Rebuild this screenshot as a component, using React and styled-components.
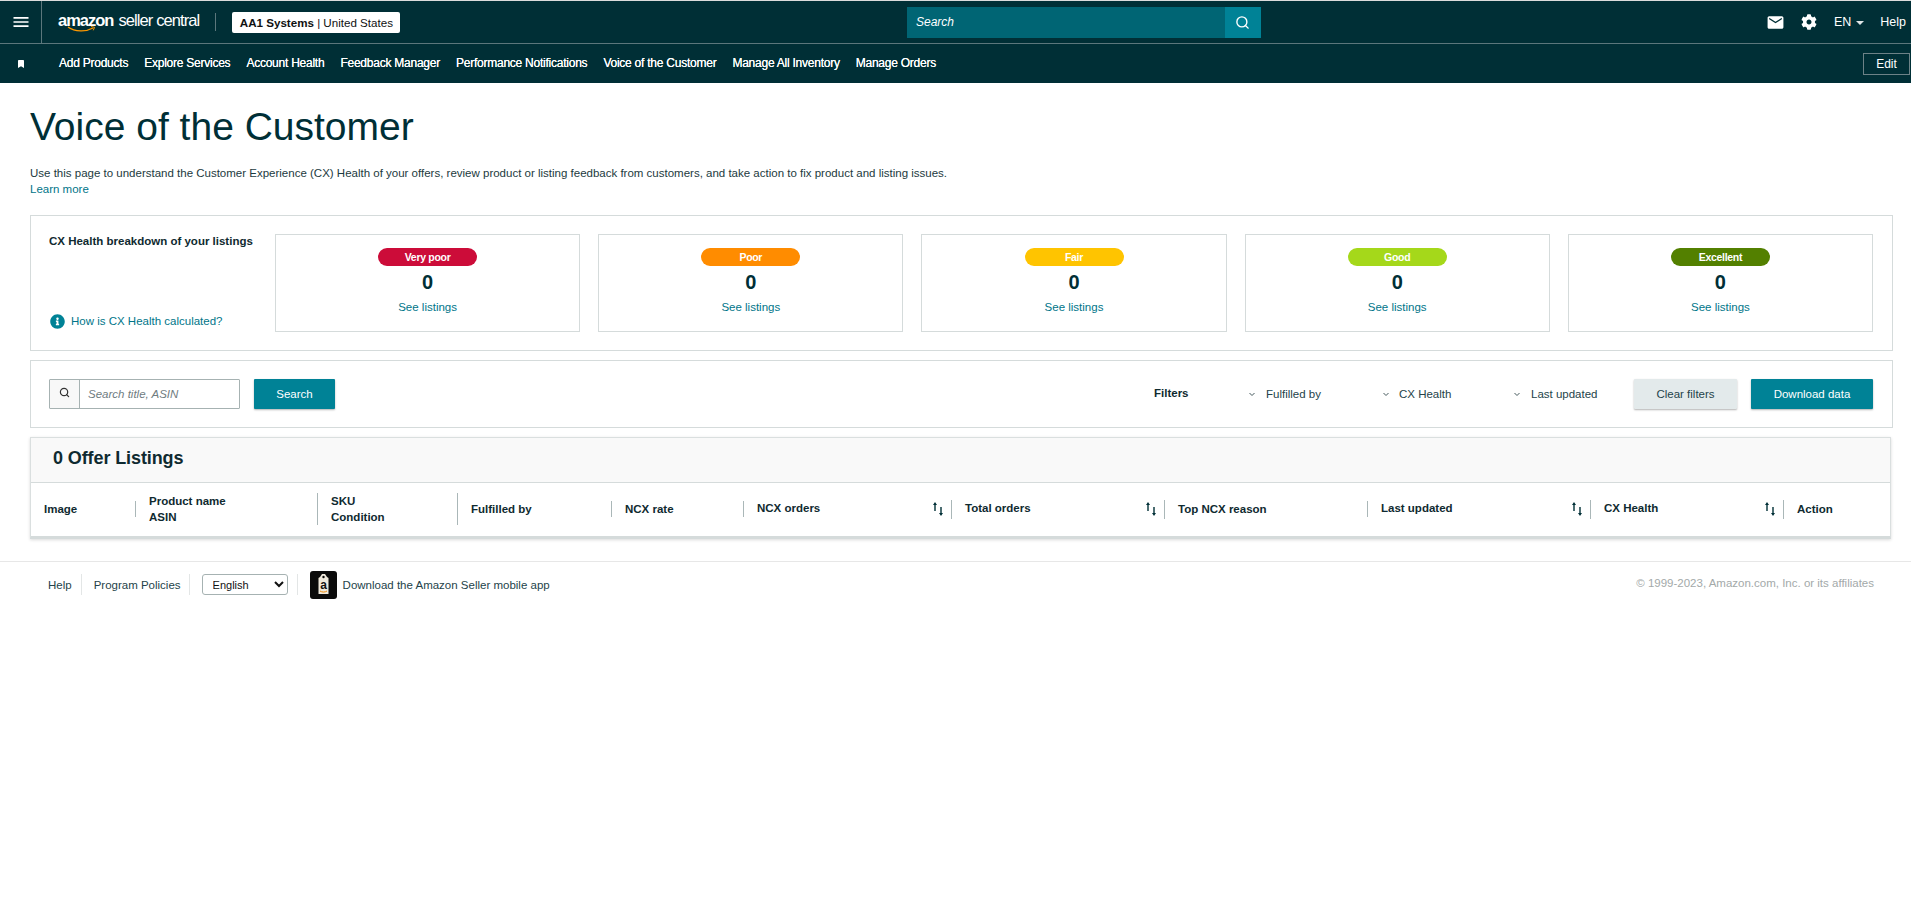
import React from 'react';
import styled, { createGlobalStyle } from 'styled-components';
import { Search as SearchIcon } from 'lucide-react';
import { MdEmail, MdMenu } from 'react-icons/md';
import { FaBookmark, FaCog, FaInfoCircle } from 'react-icons/fa';

const GlobalStyle = createGlobalStyle`
  html, body {
    margin: 0;
    padding: 0;
    background: #fff;
    font-family: "Liberation Sans", Arial, sans-serif;
    color: #002f36;
  }
  * { box-sizing: border-box; }
`;

const TopBar = styled.header`
  display: flex;
  align-items: center;
  height: 44px;
  background: #002f36;
  border-top: 1px solid #dcdcdc;
  border-bottom: 1px solid #5c777c;
  color: #fff;
`;

const Brand = styled.div`
  display: flex;
  align-items: center;
  width: 907px;
  height: 100%;
`;

const MenuCell = styled.div`
  display: flex;
  align-items: center;
  justify-content: center;
  width: 42px;
  height: 100%;
  border-right: 1px solid #5c777c;
  font-size: 20px;
`;

const Logo = styled.div`
  position: relative;
  display: flex;
  align-items: baseline;
  margin-left: 16px;
  padding-bottom: 4px;
  white-space: nowrap;
`;

const LogoWord = styled.span`
  font-size: 16.5px;
  font-weight: 700;
  letter-spacing: -1px;
`;

const LogoSub = styled.span`
  margin-left: 5px;
  font-size: 16.5px;
  letter-spacing: -0.9px;
`;

const LogoSmile = styled.svg`
  position: absolute;
  left: 9px;
  top: 15px;
`;

const BrandDivider = styled.div`
  width: 1px;
  height: 18px;
  margin: 0 16px;
  background: #5c777c;
`;

const AccountBadge = styled.div`
  display: flex;
  align-items: center;
  justify-content: center;
  width: 168px;
  height: 21px;
  background: #fff;
  border-radius: 2px;
  color: #0f1111;
  font-size: 11.6px;
  white-space: nowrap;
  b { font-weight: 700; }
`;

const GlobalSearch = styled.div`
  display: flex;
  width: 354px;
  height: 31px;
  margin-top: 1px;
`;

const GlobalSearchInput = styled.div`
  flex: 1;
  padding-left: 9px;
  background: #006574;
  font-size: 12px;
  font-style: italic;
  line-height: 31px;
`;

const GlobalSearchButton = styled.div`
  display: flex;
  align-items: center;
  justify-content: center;
  width: 36px;
  padding-right: 2px;
  background: #008296;
`;

const TopActions = styled.div`
  display: flex;
  align-items: center;
  margin-left: auto;
  padding-right: 5px;
  font-size: 12.5px;
`;

const ActionIcon = styled.span`
  display: flex;
  margin-right: ${({ $gap }) => $gap}px;
`;

const Caret = styled.span`
  width: 0;
  height: 0;
  margin: 2px 16px 0 5px;
  border-left: 4px solid transparent;
  border-right: 4px solid transparent;
  border-top: 4px solid #dfe6e7;
`;

const NavBar = styled.nav`
  display: flex;
  align-items: center;
  height: 39px;
  padding-left: 17px;
  padding-right: 1px;
  background: #002f36;
  color: #fff;
`;

const NavLinks = styled.div`
  display: flex;
  gap: 16px;
  margin-left: 34px;
  padding-bottom: 2px;
`;

const NavLink = styled.a`
  font-size: 12px;
  letter-spacing: -0.24px;
  text-shadow: 0 0 0.4px #fff;
  white-space: nowrap;
`;

const EditButton = styled.div`
  width: 47px;
  height: 22px;
  margin-left: auto;
  border: 1px solid #6d8287;
  font-size: 12px;
  line-height: 20px;
  text-align: center;
`;

const Main = styled.main`
  padding: 0 18px 0 30px;
`;

const Title = styled.h1`
  margin: 21px 0 15px;
  font-size: 39px;
  font-weight: 400;
  line-height: 46px;
`;

const Description = styled.p`
  margin: 0;
  font-size: 11.5px;
  line-height: 16px;
  color: #1c3a40;
`;

const TealLink = styled.a`
  display: block;
  color: #007589;
  font-size: 11.5px;
  line-height: 16px;
`;

const Panel = styled.section`
  display: flex;
  justify-content: space-between;
  margin-top: ${({ $top }) => $top}px;
  padding: 18px 19px 18px 18px;
  border: 1px solid #d5dbdb;
`;

const BreakdownIntro = styled.div`
  display: flex;
  flex-direction: column;
  justify-content: space-between;
  flex: 0 0 226px;
  padding-bottom: 3px;
`;

const BreakdownHeading = styled.div`
  margin-top: -1px;
  font-size: 11.5px;
  font-weight: 700;
  line-height: 16px;
  color: #0f2a30;
`;

const InfoRow = styled.div`
  display: flex;
  align-items: center;
  gap: 6px;
  padding-left: 1px;
  color: #008296;
`;

const Cards = styled.div`
  display: flex;
  flex: 1;
  gap: 18px;
`;

const Card = styled.div`
  display: flex;
  flex: 1;
  flex-direction: column;
  align-items: center;
  height: 98px;
  padding-top: 13px;
  border: 1px solid #d5dbdb;
`;

const Pill = styled.div`
  width: 99px;
  height: 18px;
  border-radius: 9px;
  background: ${({ $color }) => $color};
  color: #fff;
  font-size: 10.5px;
  font-weight: 700;
  letter-spacing: -0.3px;
  line-height: 18px;
  text-align: center;
`;

const Count = styled.div`
  margin: 4px 0 5px;
  font-size: 20px;
  font-weight: 700;
  line-height: 24px;
`;

const SearchGroup = styled.div`
  display: flex;
  align-items: stretch;
  gap: 14px;
`;

const SearchBox = styled.div`
  display: flex;
  width: 191px;
  height: 30px;
  border: 1px solid #a6b2b2;
  border-radius: 1px;
`;

const SearchAddon = styled.div`
  display: flex;
  align-items: center;
  justify-content: center;
  width: 30px;
  padding-bottom: 3px;
  background: #f8f8f8;
  border-right: 1px solid #a6b2b2;
  color: #333;
`;

const SearchPlaceholder = styled.div`
  padding-left: 8px;
  color: #6f7c7f;
  font-size: 11.5px;
  font-style: italic;
  line-height: 28px;
`;

const Button = styled.div`
  width: ${({ $width }) => $width}px;
  height: 30px;
  border-radius: 1px;
  background: ${({ $secondary }) => ($secondary ? '#e3eaeb' : '#008296')};
  box-shadow: 0 1px 2px rgba(0, 0, 0, 0.3);
  color: ${({ $secondary }) => ($secondary ? '#24434a' : '#fff')};
  font-size: 11.5px;
  line-height: 30px;
  text-align: center;
`;

const FilterGroup = styled.div`
  display: flex;
  align-items: center;
  font-size: 11.5px;
`;

const FilterLabel = styled.div`
  width: 95px;
  margin: -2px 0 0 1px;
  font-weight: 700;
  color: #0f2a30;
`;

const FilterSelect = styled.div`
  display: flex;
  align-items: center;
  gap: ${({ $gap }) => $gap}px;
  width: ${({ $width }) => $width}px;
  color: #24434a;
`;

const ClearSlot = styled.div`
  margin-right: 14px;
`;

const TablePanel = styled.section`
  margin: 9px 2px 0 0;
  border: 1px solid #dadfdf;
  border-bottom: 3px solid #d5dbdb;
  box-shadow: 0 1px 3px rgba(0, 0, 0, 0.15);
`;

const TableTitle = styled.div`
  height: 45px;
  padding-left: 22px;
  background: #f9f9f9;
  border-bottom: 1px solid #d5dbdb;
  font-size: 18px;
  font-weight: 700;
  letter-spacing: -0.1px;
  line-height: 41px;
  color: #0f2a30;
`;

const HeaderRow = styled.div`
  display: grid;
  grid-template-columns: 105px 182px 140px 154px 132px 208px 213px 203px 223px 193px 106px;
  height: 53px;
  padding-bottom: 1px;
`;

const HeaderCell = styled.div`
  display: flex;
  align-items: center;
  padding-left: 13px;
  color: #0f2a30;
  font-size: 11.5px;
  font-weight: 700;
  line-height: 16px;
`;

const HeaderLabel = styled.div`
  flex: 1;
  margin-top: ${({ $sortable }) => ($sortable ? '-3px' : '0')};
`;

const SortIcon = styled.svg`
  margin: 0 8px 0 0;
`;

const Separator = styled.div`
  width: 1px;
  height: ${({ $height }) => $height}px;
  background: #aab7b8;
`;

const Footer = styled.footer`
  display: flex;
  align-items: center;
  height: 46px;
  margin-top: 22px;
  padding: 0 37px 0 48px;
  border-top: 1px solid #e7e7e7;
  font-size: 11.5px;
  color: #24434a;
`;

const FooterItem = styled.div`
  display: flex;
  align-items: center;
  height: 21px;
  margin-right: 12px;
  padding-right: ${({ $pad = 9 }) => $pad}px;
  border-right: 1px solid #e3e6e6;
`;

const LanguageSelect = styled.select`
  width: 86px;
  height: 21px;
  padding-left: 6px;
  background: #fff;
  border: 1px solid #a6b2b2;
  border-radius: 3px;
  color: #111;
  font-family: "Liberation Sans", Arial, sans-serif;
  font-size: 11px;
`;

const AppPromo = styled.div`
  display: flex;
  align-items: center;
  gap: 6px;
`;

const Copyright = styled.div`
  margin: -4px 0 0 auto;
  color: #a3a9a9;
  font-size: 11.5px;
`;

const Chevron = () => (
  <svg width="6" height="5" viewBox="0 0 6 5" fill="none" stroke="#44585c" strokeWidth="1">
    <path d="M.5 1l2.5 2.5L5.5 1" />
  </svg>
);

const Sort = () => (
  <SortIcon width="10" height="14" viewBox="0 0 10 14" fill="#002f36">
    <path d="M2 0L4 3H2.7v6H1.3V3H0z" />
    <path d="M7.3 5h1.4v6H10l-2 3-2-3h1.3z" />
  </SortIcon>
);

const AppIcon = () => (
  <svg width="27" height="28" viewBox="0 0 27 28">
    <rect width="27" height="28" rx="3" fill="#0b0b0b" />
    <path d="M10 6l2-3h3l2 3 1.500 1v16h-10V7z" fill="#efe9dc" />
    <circle cx="13.500" cy="6" r="1.200" fill="#0b0b0b" />
    <text x="13.500" y="18" textAnchor="middle" fontFamily="Liberation Sans" fontWeight="700" fontSize="12" fill="#111">a</text>
    <path d="M10 20c2 1.400 5 1.400 7 0" stroke="#f08804" strokeWidth="1" fill="none" />
  </svg>
);

const ratings = [
  { label: 'Very poor', color: '#cc0c39' },
  { label: 'Poor', color: '#ff8c00' },
  { label: 'Fair', color: '#ffc400' },
  { label: 'Good', color: '#a5d81a' },
  { label: 'Excellent', color: '#538000' },
];

const navItems = [
  'Add Products',
  'Explore Services',
  'Account Health',
  'Feedback Manager',
  'Performance Notifications',
  'Voice of the Customer',
  'Manage All Inventory',
  'Manage Orders',
];

const columns = [
  { lines: ['Image'], sep: 16 },
  { lines: ['Product name', 'ASIN'], sep: 32 },
  { lines: ['SKU', 'Condition'], sep: 32 },
  { lines: ['Fulfilled by'], sep: 16 },
  { lines: ['NCX rate'], sep: 16 },
  { lines: ['NCX orders'], sep: 19, sortable: true },
  { lines: ['Total orders'], sep: 19, sortable: true },
  { lines: ['Top NCX reason'], sep: 16 },
  { lines: ['Last updated'], sep: 19, sortable: true },
  { lines: ['CX Health'], sep: 19, sortable: true },
  { lines: ['Action'] },
];

export default function App() {
  return (
    <>
      <GlobalStyle />
      <TopBar>
        <Brand>
          <MenuCell>
            <MdMenu />
          </MenuCell>
          <Logo>
            <LogoWord>amazon</LogoWord>
            <LogoSub>seller central</LogoSub>
            <LogoSmile width="30" height="7" viewBox="0 0 30 7" fill="none">
              <path d="M1 1c7 5 18 5 25 1" stroke="#f90" strokeWidth="1.300" />
              <path d="M24 0.500l3.500.8-1.200 3" stroke="#f90" strokeWidth="1" />
            </LogoSmile>
          </Logo>
          <BrandDivider />
          <AccountBadge>
            <b>AA1 Systems</b>&nbsp;| United States
          </AccountBadge>
        </Brand>
        <GlobalSearch>
          <GlobalSearchInput>Search</GlobalSearchInput>
          <GlobalSearchButton>
            <SearchIcon size={15} color="#fff" strokeWidth={2.2} />
          </GlobalSearchButton>
        </GlobalSearch>
        <TopActions>
          <ActionIcon $gap={16}>
            <MdEmail size={19} />
          </ActionIcon>
          <ActionIcon $gap={17}>
            <FaCog size={16} />
          </ActionIcon>
          EN
          <Caret />
          Help
        </TopActions>
      </TopBar>
      <NavBar>
        <FaBookmark size={8} />
        <NavLinks>
          {navItems.map((item) => (
            <NavLink key={item}>{item}</NavLink>
          ))}
        </NavLinks>
        <EditButton>Edit</EditButton>
      </NavBar>
      <Main>
        <Title>Voice of the Customer</Title>
        <Description>
          Use this page to understand the Customer Experience (CX) Health of your offers, review product or listing
          feedback from customers, and take action to fix product and listing issues.
        </Description>
        <TealLink>Learn more</TealLink>
        <Panel $top={18}>
          <BreakdownIntro>
            <BreakdownHeading>CX Health breakdown of your listings</BreakdownHeading>
            <InfoRow>
              <FaInfoCircle size={15} />
              <TealLink>How is CX Health calculated?</TealLink>
            </InfoRow>
          </BreakdownIntro>
          <Cards>
            {ratings.map((rating) => (
              <Card key={rating.label}>
                <Pill $color={rating.color}>{rating.label}</Pill>
                <Count>0</Count>
                <TealLink>See listings</TealLink>
              </Card>
            ))}
          </Cards>
        </Panel>
        <Panel $top={9}>
          <SearchGroup>
            <SearchBox>
              <SearchAddon>
                <SearchIcon size={11} strokeWidth={2.6} />
              </SearchAddon>
              <SearchPlaceholder>Search title, ASIN</SearchPlaceholder>
            </SearchBox>
            <Button $width={81}>Search</Button>
          </SearchGroup>
          <FilterGroup>
            <FilterLabel>Filters</FilterLabel>
            <FilterSelect $width={134} $gap={11}>
              <Chevron />
              Fulfilled by
            </FilterSelect>
            <FilterSelect $width={131} $gap={10}>
              <Chevron />
              CX Health
            </FilterSelect>
            <FilterSelect $width={120} $gap={11}>
              <Chevron />
              Last updated
            </FilterSelect>
            <ClearSlot>
              <Button $width={103} $secondary>
                Clear filters
              </Button>
            </ClearSlot>
            <Button $width={122}>Download data</Button>
          </FilterGroup>
        </Panel>
        <TablePanel>
          <TableTitle>0 Offer Listings</TableTitle>
          <HeaderRow>
            {columns.map((column) => (
              <HeaderCell key={column.lines[0]}>
                <HeaderLabel $sortable={column.sortable}>
                  {column.lines.map((line) => (
                    <div key={line}>{line}</div>
                  ))}
                </HeaderLabel>
                {column.sortable && <Sort />}
                {column.sep && <Separator $height={column.sep} />}
              </HeaderCell>
            ))}
          </HeaderRow>
        </TablePanel>
      </Main>
      <Footer>
        <FooterItem>Help</FooterItem>
        <FooterItem $pad={8}>Program Policies</FooterItem>
        <FooterItem>
          <LanguageSelect defaultValue="English">
            <option>English</option>
          </LanguageSelect>
        </FooterItem>
        <AppPromo>
          <AppIcon />
          Download the Amazon Seller mobile app
        </AppPromo>
        <Copyright>© 1999-2023, Amazon.com, Inc. or its affiliates</Copyright>
      </Footer>
    </>
  );
}
